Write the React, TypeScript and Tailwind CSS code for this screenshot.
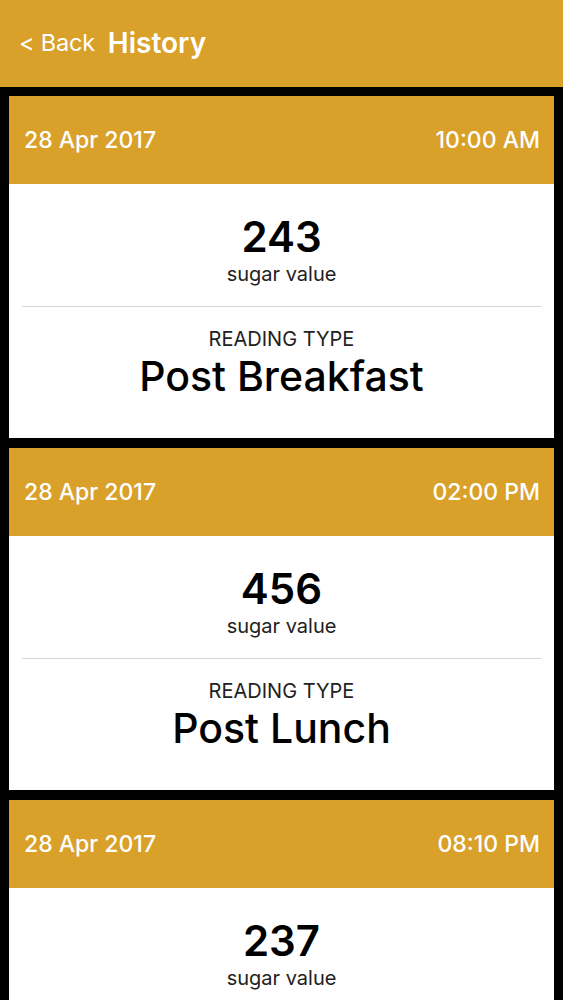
const readings = [
  { date: "28 Apr 2017", time: "10:00 AM", value: "243", type: "Post Breakfast" },
  { date: "28 Apr 2017", time: "02:00 PM", value: "456", type: "Post Lunch" },
  { date: "28 Apr 2017", time: "08:10 PM", value: "237", type: "Post Dinner" },
];

export default function App() {
  return (
    <div className="h-[1000px] overflow-hidden bg-black font-['Inter',sans-serif]">
      {/* Nav bar */}
      <div className="h-[87px] bg-[#d9a02a] flex items-center pl-[19px] pb-[1px] text-white">
        <span className="text-[23.5px] tracking-[-0.2px]">&lt; Back</span>
        <span className="ml-[13px] text-[28px] font-semibold">History</span>
      </div>

      {/* List */}
      <div className="flex flex-col gap-[10px] pt-[9px] px-[9px]">
        {readings.map((r, i) => (
          <div key={i} className="flex flex-col">
            <div className="h-[88px] bg-[#d9a02a] flex items-center justify-between pl-[15px] pr-[14px] text-white text-[23px] font-medium">
              <span>{r.date}</span>
              <span>{r.time}</span>
            </div>
            <div className="h-[254px] bg-white flex flex-col items-center px-[13px]">
              <div className="mt-[28px] text-[42px] font-semibold leading-[50px] text-black">{r.value}</div>
              <div className="text-[20px] leading-[24px] text-[#222]">sugar value</div>
              <div className="w-full h-px bg-[#d6d6d6] mt-[20px]" />
              <div className="mt-[20px] text-[20px] leading-[24px] text-[#222]">READING TYPE</div>
              <div className="text-[41px] font-medium leading-[50px] text-black">{r.type}</div>
            </div>
          </div>
        ))}
      </div>
    </div>
  );
}
